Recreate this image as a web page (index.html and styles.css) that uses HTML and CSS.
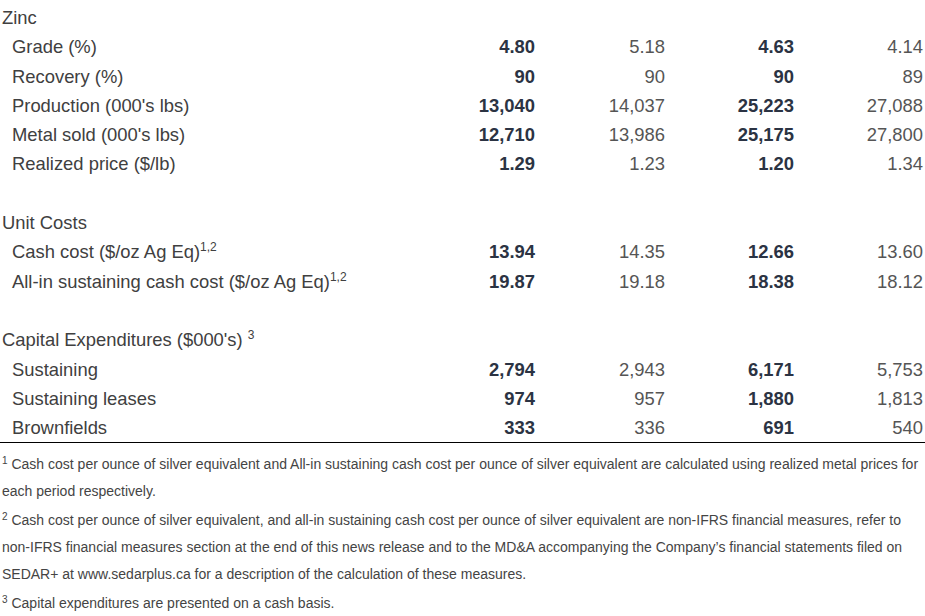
FILE: index.html
```html
<!DOCTYPE html>
<html>
<head>
<meta charset="utf-8">
<link rel="stylesheet" href="styles.css">
</head>
<body>
<table class="data">
  <colgroup>
    <col class="c-label"><col class="c-num"><col class="c-num"><col class="c-num2"><col class="c-num2">
  </colgroup>
  <tbody>
    <tr><td class="head">Zinc</td><td></td><td></td><td></td><td></td></tr>
    <tr><td class="sub">Grade (%)</td><td class="b">4.80</td><td class="n">5.18</td><td class="b">4.63</td><td class="n">4.14</td></tr>
    <tr><td class="sub">Recovery (%)</td><td class="b">90</td><td class="n">90</td><td class="b">90</td><td class="n">89</td></tr>
    <tr><td class="sub">Production (000's lbs)</td><td class="b">13,040</td><td class="n">14,037</td><td class="b">25,223</td><td class="n">27,088</td></tr>
    <tr><td class="sub">Metal sold (000's lbs)</td><td class="b">12,710</td><td class="n">13,986</td><td class="b">25,175</td><td class="n">27,800</td></tr>
    <tr><td class="sub">Realized price ($/lb)</td><td class="b">1.29</td><td class="n">1.23</td><td class="b">1.20</td><td class="n">1.34</td></tr>
    <tr><td class="head">&nbsp;</td><td></td><td></td><td></td><td></td></tr>
    <tr><td class="head">Unit Costs</td><td></td><td></td><td></td><td></td></tr>
    <tr><td class="sub">Cash cost ($/oz Ag Eq)<sup>1,2</sup></td><td class="b">13.94</td><td class="n">14.35</td><td class="b">12.66</td><td class="n">13.60</td></tr>
    <tr><td class="sub">All-in sustaining cash cost ($/oz Ag Eq)<sup>1,2</sup></td><td class="b">19.87</td><td class="n">19.18</td><td class="b">18.38</td><td class="n">18.12</td></tr>
    <tr><td class="head">&nbsp;</td><td></td><td></td><td></td><td></td></tr>
    <tr><td class="head">Capital Expenditures ($000's) <sup>3</sup></td><td></td><td></td><td></td><td></td></tr>
    <tr><td class="sub">Sustaining</td><td class="b">2,794</td><td class="n">2,943</td><td class="b">6,171</td><td class="n">5,753</td></tr>
    <tr><td class="sub">Sustaining leases</td><td class="b">974</td><td class="n">957</td><td class="b">1,880</td><td class="n">1,813</td></tr>
    <tr class="last"><td class="sub">Brownfields</td><td class="b">333</td><td class="n">336</td><td class="b">691</td><td class="n">540</td></tr>
  </tbody>
</table>
<div class="notes">
  <p><sup>1</sup> Cash cost per ounce of silver equivalent and All-in sustaining cash cost per ounce of silver equivalent are calculated using realized metal prices for each period respectively.</p>
  <p><sup>2</sup> Cash cost per ounce of silver equivalent, and all-in sustaining cash cost per ounce of silver equivalent are non-IFRS financial measures, refer to non-IFRS financial measures section at the end of this news release and to the MD&amp;A accompanying the Company’s financial statements filed on SEDAR+ at www.sedarplus.ca for a description of the calculation of these measures.</p>
  <p><sup>3</sup> Capital expenditures are presented on a cash basis.</p>
</div>
</body>
</html>
```

FILE: styles.css
```css
html, body {
  margin: 0;
  padding: 0;
  background: #ffffff;
}
body {
  font-family: "Liberation Sans", Arial, sans-serif;
  color: #404040;
  padding-top: 3px;
}
.data {
  width: 925px;
  table-layout: fixed;
  border-collapse: collapse;
  font-size: 18.4px;
}
.c-label { width: 407px; }
.c-num { width: 130px; }
.c-num2 { width: 129px; }
.data td {
  height: 29.3px;
  padding: 0 2px;
  line-height: 29.3px;
  white-space: nowrap;
  vertical-align: middle;
}
.data td.head { color: #404040; }
.data td.sub { padding-left: 12px; color: #404040; }
.data td.b {
  text-align: right;
  font-weight: bold;
  color: #2b3343;
}
.data td.n {
  text-align: right;
  color: #555555;
}
.data sup {
  font-size: 12px;
  line-height: 0;
  vertical-align: 7px;
}
.data tr.last td {
  border-bottom: 1px solid #000000;
}
.notes {
  padding-top: 8px;
  font-size: 14px;
  line-height: 27px;
  color: #444444;
}
.notes p {
  margin: 0 0 2px 0;
  padding-left: 2px;
}
.notes sup {
  font-size: 10px;
  line-height: 0;
  vertical-align: 5px;
}
```
